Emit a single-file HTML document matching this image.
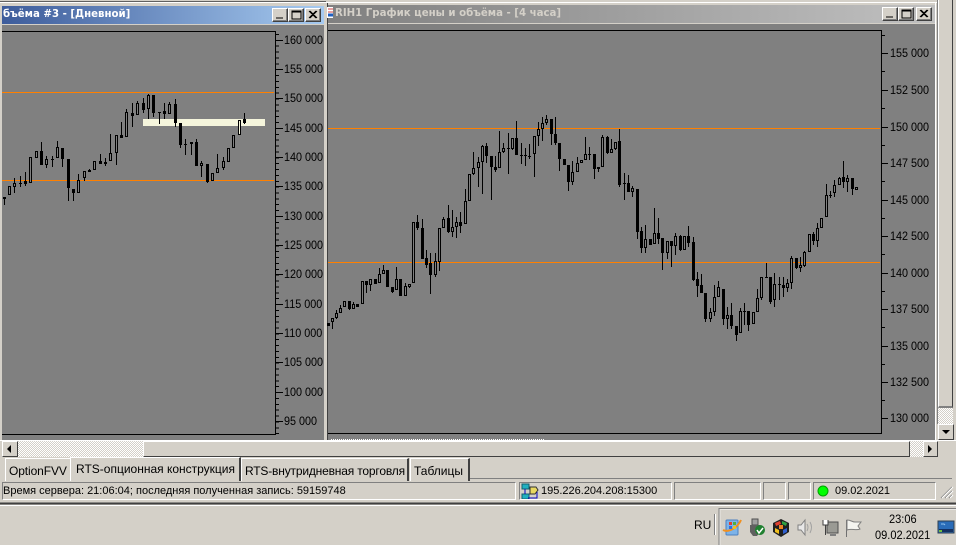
<!DOCTYPE html>
<html><head><meta charset="utf-8"><style>
html,body{margin:0;padding:0;background:#d4d0c8;width:956px;height:545px;overflow:hidden}
div,span{position:absolute;box-sizing:border-box}
span{white-space:nowrap}
body{font-family:"Liberation Sans",sans-serif;color:#000}
.t{font:bold 10.2px "DejaVu Sans",sans-serif;line-height:18px}
.b{width:16px;height:14px;background:#d4d0c8;border:1px solid;border-color:#fff #404040 #404040 #fff;box-shadow:inset -1px -1px 0 #808080}
.p{top:482px;height:18px;border:1px solid;border-color:#808080 #fff #fff #808080}
.s{font-size:11px;top:484px;line-height:14px}
.r{font-size:12px;line-height:14px;transform:scaleX(.9);transform-origin:0 50%}
.c{font-size:12px;transform:scaleX(.92);transform-origin:0 50%}
</style></head><body>
<div style="left:0;top:1px;width:326px;height:1px;background:#606060"></div>
<div style="left:0;top:2px;width:937px;height:1px;background:#fff"></div>

<!-- left title -->
<div style="left:2px;top:6px;width:322px;height:18px;background:linear-gradient(90deg,#3d5c9b,#a6caf0)"></div>
<span class="t" style="left:3px;top:6px;color:#fff">бъёма #3 - [Дневной]</span>
<div style="left:2px;top:24px;width:322px;height:1px;background:#d4d0c8"></div>
<div style="left:2px;top:25px;width:322px;height:415px;background:#808080"></div>
<!-- right title -->
<div style="left:328px;top:5px;width:607px;height:18px;background:linear-gradient(90deg,#808080,#c0c0c0)"></div>
<span class="t" style="left:335px;top:5px;color:#d4d0c8">RIH1 График цены и объёма - [4 часа]</span>
<div style="left:328px;top:23px;width:607px;height:1px;background:#d4d0c8"></div>
<div style="left:328px;top:24px;width:607px;height:416px;background:#808080"></div>
<div style="left:327px;top:3px;width:1px;height:437px;background:#404040"></div>
<div style="left:935px;top:3px;width:1px;height:437px;background:#fff"></div>
<div style="left:937px;top:0;width:1px;height:424px;background:#808080"></div>

<!-- buttons -->
<div class="b" style="left:272px;top:8px"></div><div class="b" style="left:288px;top:8px"></div><div class="b" style="left:305px;top:8px"></div>
<div class="b" style="left:882px;top:7px"></div><div class="b" style="left:898px;top:7px"></div><div class="b" style="left:916px;top:7px"></div>

<svg width="956" height="545" style="position:absolute;left:0;top:0" shape-rendering="crispEdges">
<!-- button glyphs -->
<path d="M276 18h7M292 11h9v8h-9zM292 12h9M886 17h7M902 10h9v8h-9zM902 11h9" fill="none" stroke="#000" stroke-width="1"/>
<path d="M309 11l7 7M310 11l7 7M316 11l-7 7M317 11l-7 7M920 10l7 7M921 10l7 7M927 10l-7 7M928 10l-7 7" stroke="#000" shape-rendering="auto"/>
<!-- small app icon -->
<rect x="327" y="7" width="6" height="11" fill="#fff"/><path d="M328 9h5M328 12h5" stroke="#d04040"/><path d="M328 15h5" stroke="#2060c0" stroke-width="3"/>

<!-- left frame -->
<path d="M2 31.500H275.500V434.500H2" fill="none" stroke="#000"/>
<path d="M277.500 34V434" stroke="#000" stroke-width="3" stroke-dasharray="1 4.87" fill="none"/>
<path d="M276 40h7M276 69h7M276 98h7M276 128h7M276 157h7M276 186h7M276 216h7M276 245h7M276 274h7M276 304h7M276 333h7M276 362h7M276 392h7M276 421h7" stroke="#000" transform="translate(0,.5)"/>
<!-- right frame -->
<path d="M328 30.500H881.500V433.500H328" fill="none" stroke="#000"/>
<path d="M882 53.500h6M882 90.500h6M882 127.500h6M882 163.500h6M882 200.500h6M882 236.500h6M882 273.500h6M882 309.500h6M882 346.500h6M882 382.500h6M882 418.500h6M882 35.500h3M882 71.500h3M882 108.500h3M882 145.500h3M882 181.500h3M882 218.500h3M882 254.500h3M882 291.500h3M882 327.500h3M882 364.500h3M882 400.500h3" stroke="#000"/>

<!-- left orange -->
<path d="M2 92.500H274M2 180.500H274" stroke="#ff8000"/>
<!-- right orange -->
<path d="M328 128.500H880M328 262.500H880" stroke="#ff8000"/>
<rect x="143" y="119" width="122" height="7" fill="#f5f5dc"/>

<!-- left wicks -->
<path stroke="#000" fill="none" d="M4.500 197V205M14.500 178V193M20.500 176V187M25.500 172V186M41.500 142V165M46.500 156V168M52.500 156V167M57.500 141V158M62.500 148V167M68.500 159V201M73.500 189V201M78.500 174V193M84.500 171V181M89.500 169V172M100.500 154V164M105.500 158V166M110.500 134V161M116.500 135V165M121.500 122V138M126.500 109V137M132.500 103V127M137.500 101V115M143.500 98V113M148.500 94V119M153.500 95V117M159.500 112V124M164.500 103V119M169.500 102V114M175.500 99V127M180.500 123V148M185.500 139V155M191.500 142V155M196.500 139V166M201.500 161V177M207.500 164V183M212.500 173V181M217.500 154V173M223.500 157V170M244.500 113V124"/>
<!-- left filled -->
<path stroke="#000" stroke-width="3" fill="none" d="M4.500 197V199M20.500 183V184M25.500 181V184M41.500 151V165M52.500 159V160M62.500 148V159M68.500 159V188M73.500 189V193M89.500 170V172M100.500 161V164M121.500 135V138M132.500 113V116M143.500 103V110M153.500 95V113M159.500 112V113M164.500 111V114M175.500 104V123M180.500 123V145M185.500 144V145M196.500 142V166M207.500 164V182M244.500 119V123"/>
<!-- left hollow -->
<path stroke="#000" fill="#808080" d="M8.500 186.500h2V194.500h-2zM13.500 183.500h2V186.500h-2zM29.500 157.500h2V182.500h-2zM35.500 151.500h2V157.500h-2zM45.500 159.500h2V164.500h-2zM56.500 147.500h2V157.500h-2zM77.500 180.500h2V192.500h-2zM83.500 171.500h2V177.500h-2zM93.500 161.500h2V169.500h-2zM104.500 162.500h2V163.500h-2zM109.500 153.500h2V160.500h-2zM115.500 135.500h2V152.500h-2zM125.500 112.500h2V136.500h-2zM136.500 103.500h2V114.500h-2zM147.500 95.500h2V108.500h-2zM168.500 104.500h2V113.500h-2zM190.500 142.500h2V143.500h-2zM200.500 163.500h2V165.500h-2zM211.500 173.500h2V180.500h-2zM216.500 168.500h2V172.500h-2zM222.500 161.500h2V167.500h-2zM227.500 148.500h2V161.500h-2zM232.500 135.500h2V147.500h-2z"/>
<path stroke="#000" fill="#f5f5dc" d="M238.500 120.500h2V134.500h-2z"/>

<!-- right wicks -->
<path stroke="#000" fill="none" d="M332.500 318V329M336.500 310V319M340.500 305V313M344.500 301V307M349.500 301V310M353.500 302V309M362.500 281V304M366.500 281V293M370.500 279V291M379.500 268V283M383.500 265V274M392.500 287V293M396.500 267V290M405.500 283V296M409.500 284V288M417.500 215V230M422.500 219V259M426.500 250V268M430.500 253V294M435.500 253V277M439.500 228V271M443.500 217V228M448.500 205V233M452.500 210V237M456.500 217V238M460.500 212V233M465.500 189V224M473.500 152V175M478.500 157V187M482.500 145V194M486.500 143V163M491.500 156V200M495.500 156V172M499.500 131V168M503.500 143V153M508.500 133V174M512.500 138V150M516.500 121V155M521.500 143V164M525.500 148V166M529.500 144V159M534.500 136V177M538.500 122V146M542.500 117V141M546.500 115V125M551.500 119V145M555.500 117V145M559.500 143V171M568.500 165V191M572.500 161V185M577.500 157V172M585.500 137V160M589.500 147V160M594.500 154V179M598.500 167V172M602.500 135V167M607.500 136V154M611.500 139V153M615.500 142V150M619.500 129V187M624.500 173V200M628.500 175V192M632.500 186V197M637.500 189V239M641.500 227V253M645.500 225V253M654.500 208V244M658.500 218V244M662.500 238V270M667.500 241V259M671.500 241V267M675.500 233V255M680.500 235V251M688.500 226V247M693.500 237V281M697.500 272V297M701.500 274V293M705.500 293V322M710.500 308V322M714.500 285V316M718.500 281V297M723.500 289V325M727.500 307V329M731.500 303V329M736.500 326V341M740.500 308V333M744.500 303V325M748.500 311V331M757.500 289V312M761.500 277V300M766.500 263V278M770.500 277V304M774.500 273V307M779.500 277V300M783.500 277V297M787.500 279V292M791.500 256V289M796.500 258V269M800.500 257V272M804.500 251V267M809.500 234V252M813.500 232V245M817.500 223V247M826.500 184V217M830.500 191V198M834.500 180V197M839.500 177V185M843.500 161V188M847.500 175V192M852.500 178V195"/>
<!-- right filled -->
<path stroke="#000" stroke-width="3" fill="none" d="M328.500 323V326M349.500 301V309M357.500 304V307M366.500 281V285M375.500 279V284M387.500 270V287M392.500 287V292M400.500 279V296M417.500 222V228M422.500 228V259M426.500 258V265M430.500 263V275M448.500 218V232M460.500 222V226M486.500 146V156M491.500 156V167M495.500 167V170M508.500 148V149M516.500 138V155M521.500 155V156M525.500 155V156M529.500 156V157M551.500 119V134M555.500 134V143M559.500 143V159M564.500 159V165M568.500 165V182M589.500 154V155M594.500 154V169M607.500 137V153M619.500 141V185M624.500 183V184M628.500 183V192M637.500 189V232M641.500 231V248M650.500 239V245M658.500 233V239M662.500 238V253M671.500 241V246M680.500 236V250M688.500 236V243M693.500 242V280M697.500 279V286M701.500 285V293M705.500 293V319M723.500 289V319M731.500 315V326M736.500 326V335M744.500 311V312M748.500 311V325M766.500 277V278M770.500 277V302M779.500 284V285M783.500 285V288M796.500 258V268M813.500 234V241M830.500 195V196M843.500 177V182M852.500 178V189"/>
<!-- right hollow -->
<path stroke="#000" fill="#808080" d="M331.500 318.500h2V321.500h-2zM335.500 313.500h2V317.500h-2zM339.500 308.500h2V312.500h-2zM343.500 301.500h2V306.500h-2zM352.500 304.500h2V308.500h-2zM361.500 281.500h2V303.500h-2zM369.500 279.500h2V284.500h-2zM378.500 274.500h2V282.500h-2zM382.500 270.500h2V273.500h-2zM395.500 279.500h2V289.500h-2zM404.500 286.500h2V295.500h-2zM408.500 284.500h2V286.500h-2zM412.500 222.500h2V282.500h-2zM434.500 261.500h2V274.500h-2zM438.500 228.500h2V261.500h-2zM442.500 219.500h2V227.500h-2zM451.500 227.500h2V231.500h-2zM455.500 222.500h2V226.500h-2zM464.500 201.500h2V223.500h-2zM468.500 174.500h2V200.500h-2zM472.500 168.500h2V173.500h-2zM477.500 162.500h2V167.500h-2zM481.500 146.500h2V161.500h-2zM498.500 152.500h2V167.500h-2zM502.500 148.500h2V151.500h-2zM511.500 138.500h2V148.500h-2zM533.500 136.500h2V153.500h-2zM537.500 129.500h2V135.500h-2zM541.500 123.500h2V128.500h-2zM545.500 119.500h2V122.500h-2zM571.500 172.500h2V181.500h-2zM576.500 163.500h2V171.500h-2zM580.500 160.500h2V162.500h-2zM584.500 154.500h2V159.500h-2zM597.500 167.500h2V168.500h-2zM601.500 137.500h2V166.500h-2zM610.500 149.500h2V152.500h-2zM614.500 142.500h2V148.500h-2zM631.500 188.500h2V191.500h-2zM644.500 239.500h2V247.500h-2zM653.500 233.500h2V243.500h-2zM666.500 241.500h2V252.500h-2zM674.500 236.500h2V245.500h-2zM683.500 236.500h2V249.500h-2zM709.500 312.500h2V318.500h-2zM713.500 297.500h2V311.500h-2zM717.500 287.500h2V296.500h-2zM726.500 315.500h2V318.500h-2zM739.500 311.500h2V332.500h-2zM752.500 312.500h2V323.500h-2zM756.500 298.500h2V311.500h-2zM760.500 277.500h2V297.500h-2zM773.500 284.500h2V299.500h-2zM786.500 283.500h2V287.500h-2zM790.500 258.500h2V282.500h-2zM799.500 265.500h2V267.500h-2zM803.500 252.500h2V265.500h-2zM808.500 234.500h2V251.500h-2zM816.500 228.500h2V240.500h-2zM820.500 218.500h2V227.500h-2zM825.500 195.500h2V216.500h-2zM833.500 185.500h2V192.500h-2zM838.500 178.500h2V184.500h-2zM846.500 178.500h2V181.500h-2zM855.500 187.500h2V189.500h-2z"/>
<path stroke="#000" d="M743 311.500h3M528 156.500h3M588 154.500h3" fill="none"/>
<path d="M331 439.500H544" stroke="#fff" stroke-dasharray="1 1"/>

<!-- taskbar dividers -->
<path d="M0 440.500H956" stroke="#fff"/>
<path d="M0 503.500H956" stroke="#404040" stroke-width="2"/>
<path d="M0 505.500H956" stroke="#fff"/>
<path d="M719 545V508.500H956" stroke="#808080" fill="none"/>
<path d="M720 545V509.500H956" stroke="#fff" fill="none" opacity=".5"/>
<path d="M714.500 514V535" stroke="#808080"/><path d="M715.500 514V535" stroke="#fff"/>

<!-- tray icons -->
<g shape-rendering="auto">
<rect x="726" y="520" width="12" height="15" rx="1" fill="#7db3e8" stroke="#4d80c0"/>
<path d="M723 530c6 3 15-3 18-10" fill="none" stroke="#f09020" stroke-width="2"/>
<rect x="729" y="522" width="3" height="3" fill="#e04030"/><rect x="733" y="522" width="3" height="3" fill="#50b040"/><rect x="729" y="526" width="3" height="3" fill="#3070e0"/><rect x="733" y="526" width="3" height="3" fill="#f0c020"/>
<rect x="752" y="519" width="6" height="6" fill="#a0a0a0" stroke="#505050"/>
<path d="M750 525h10v7l-3 4h-4l-3-4z" fill="#606060"/>
<circle cx="760" cy="530" r="5" fill="#208030"/><path d="M757 530l2 3 4-5" fill="none" stroke="#fff" stroke-width="1.500"/>
<path d="M781 519l8 4v9l-8 5-8-5v-9z" fill="#202020"/>
<path d="M775 523l5-2 1 3-5 2z" fill="#e04030"/><path d="M782 521l5 2-1 3-4-2z" fill="#30a040"/><path d="M775 528l4 2v4l-4-2z" fill="#f0c020"/><path d="M783 530l4-2v4l-4 2z" fill="#3060d0"/><path d="M779 525h4v4h-4z" fill="#f08020"/>
<path d="M798 525h3l4-5v15l-4-5h-3z" fill="#e8e8e8" stroke="#808080"/>
<path d="M807 524q2 3 0 7M810 522q3 5 0 11" fill="none" stroke="#a0a0a0"/>
<rect x="827" y="522" width="11" height="11" fill="#9a9a94" stroke="#505050"/>
<rect x="830" y="534" width="6" height="2" fill="#808080"/>
<path d="M823 520v5h5v-5M825.500 525v10" fill="#fff" stroke="#404040"/>
<path d="M846.500 520V537" stroke="#707070" fill="none"/><path d="M847 520c4 0 5 2 8 2l6 0-3 4 2 3c-4 2-8-1-13 1z" fill="#f4f4f0" stroke="#808080"/>
<rect x="938" y="521" width="16" height="12" fill="#2a6cb8" stroke="#304050"/>
<rect x="939" y="529" width="14" height="3" fill="#143060"/>
<rect x="939" y="530" width="3" height="2" fill="#70c040"/>
<path d="M941 524h3l1 1" stroke="#8fbfea" fill="none"/>

<!-- status icons -->
<rect x="522" y="484" width="7" height="5" fill="#20b0c0" stroke="#106070"/>
<rect x="522" y="494" width="7" height="5" fill="#20b0c0" stroke="#106070"/>
<path d="M525 489v5M528 498h9v-6" stroke="#0000c0" fill="none"/>
<path d="M530 487h6l2 3-3 4h-5z" fill="#e8d860" stroke="#303030"/>
<circle cx="823" cy="491" r="5" fill="#00ff00" stroke="#00a000"/>
<path d="M941 498l11-11M945 498l7-7M949 498l3-3" stroke="#808080" fill="none"/>
<path d="M942 498l11-11M946 498l7-7M950 498l3-3" stroke="#fff" fill="none"/>
</g>
</svg>

<!-- left scale labels -->
<span class="r" style="left:284px;top:33px">160 000</span><span class="r" style="left:284px;top:62px">155 000</span><span class="r" style="left:284px;top:91px">150 000</span><span class="r" style="left:284px;top:121px">145 000</span><span class="r" style="left:284px;top:150px">140 000</span><span class="r" style="left:284px;top:179px">135 000</span><span class="r" style="left:284px;top:209px">130 000</span><span class="r" style="left:284px;top:238px">125 000</span><span class="r" style="left:284px;top:267px">120 000</span><span class="r" style="left:284px;top:297px">115 000</span><span class="r" style="left:284px;top:326px">110 000</span><span class="r" style="left:284px;top:355px">105 000</span><span class="r" style="left:284px;top:385px">100 000</span><span class="r" style="left:284px;top:414px">95 000</span>
<!-- right scale labels -->
<span class="r" style="left:890px;top:46px">155 000</span><span class="r" style="left:890px;top:83px">152 500</span><span class="r" style="left:890px;top:120px">150 000</span><span class="r" style="left:890px;top:156px">147 500</span><span class="r" style="left:890px;top:193px">145 000</span><span class="r" style="left:890px;top:229px">142 500</span><span class="r" style="left:890px;top:266px">140 000</span><span class="r" style="left:890px;top:302px">137 500</span><span class="r" style="left:890px;top:339px">135 000</span><span class="r" style="left:890px;top:375px">132 500</span><span class="r" style="left:890px;top:411px">130 000</span>

<!-- vertical scrollbar -->
<div style="left:938px;top:0;width:15px;height:408px;background:#d4d0c8;border-right:1px solid #404040;border-bottom:2px solid #808080;border-left:1px solid #fff"></div>
<div style="left:938px;top:408px;width:15px;height:16px;background:repeating-conic-gradient(#fff 0 25%,#d4d0c8 0 50%) 0 0/2px 2px"></div>
<div style="left:938px;top:424px;width:16px;height:16px;background:#d4d0c8;border:1px solid;border-color:#fff #404040 #404040 #fff"></div>
<div style="left:942px;top:430px;width:0;height:0;border:4px solid transparent;border-top:4px solid #000;border-bottom:0"></div>

<!-- horizontal scrollbar -->
<div style="left:2px;top:441px;width:141px;height:16px;background:repeating-conic-gradient(#fff 0 25%,#d4d0c8 0 50%) 0 0/2px 2px"></div>
<div style="left:910px;top:441px;width:13px;height:16px;background:repeating-conic-gradient(#fff 0 25%,#d4d0c8 0 50%) 0 0/2px 2px"></div>
<div style="left:2px;top:441px;width:16px;height:16px;background:#d4d0c8;border:1px solid;border-color:#fff #404040 #404040 #fff"></div>
<div style="left:7px;top:445px;width:0;height:0;border:4px solid transparent;border-right:4px solid #000;border-left:0"></div>
<div style="left:143px;top:441px;width:767px;height:16px;background:#d4d0c8;border:1px solid;border-color:#fff #404040 #404040 #fff"></div>
<div style="left:923px;top:441px;width:15px;height:16px;background:#d4d0c8;border:1px solid;border-color:#fff #404040 #404040 #fff"></div>
<div style="left:928px;top:445px;width:0;height:0;border:4px solid transparent;border-left:4px solid #000;border-right:0"></div>

<!-- tabs -->
<div style="left:470px;top:478px;width:482px;height:1px;background:#808080"></div>
<div style="left:5px;top:458px;width:65px;height:23px;border-top:1px solid #fff;border-left:1px solid #fff"></div>
<span style="left:9px;top:464px;font-size:12px;letter-spacing:-.1px">OptionFVV</span>
<div style="left:70px;top:457px;width:171px;height:24px;background:#d4d0c8;border-top:1px solid #fff;border-left:1px solid #fff;border-right:2px solid #404040"></div>
<span style="left:76px;top:462px;font-size:12px">RTS-опционная конструкция</span>
<div style="left:241px;top:458px;width:168px;height:23px;border-top:1px solid #fff;border-left:1px solid #fff;border-right:2px solid #404040"></div>
<span style="left:245px;top:464px;font-size:12px;letter-spacing:-.18px">RTS-внутридневная торговля</span>
<div style="left:410px;top:458px;width:60px;height:23px;border-top:1px solid #fff;border-left:1px solid #fff;border-right:2px solid #404040"></div>
<span style="left:414px;top:464px;font-size:12px">Таблицы</span>

<!-- status bar -->
<div class="p" style="left:2px;width:514px"></div>
<div class="p" style="left:519px;width:153px"></div>
<div class="p" style="left:674px;width:87px"></div>
<div class="p" style="left:763px;width:23px"></div>
<div class="p" style="left:788px;width:23px"></div>
<div class="p" style="left:813px;width:123px"></div>
<span class="s" style="left:3px">Время сервера: 21:06:04; последняя полученная запись: 59159748</span>
<span class="s" style="left:541px">195.226.204.208:15300</span>
<span class="s" style="left:835px">09.02.2021</span>

<!-- tray text -->
<span style="left:694px;top:518px;font-size:12px">RU</span>
<span class="c" style="left:889px;top:512px">23:06</span>
<span class="c" style="left:875px;top:528px">09.02.2021</span>
</body></html>
